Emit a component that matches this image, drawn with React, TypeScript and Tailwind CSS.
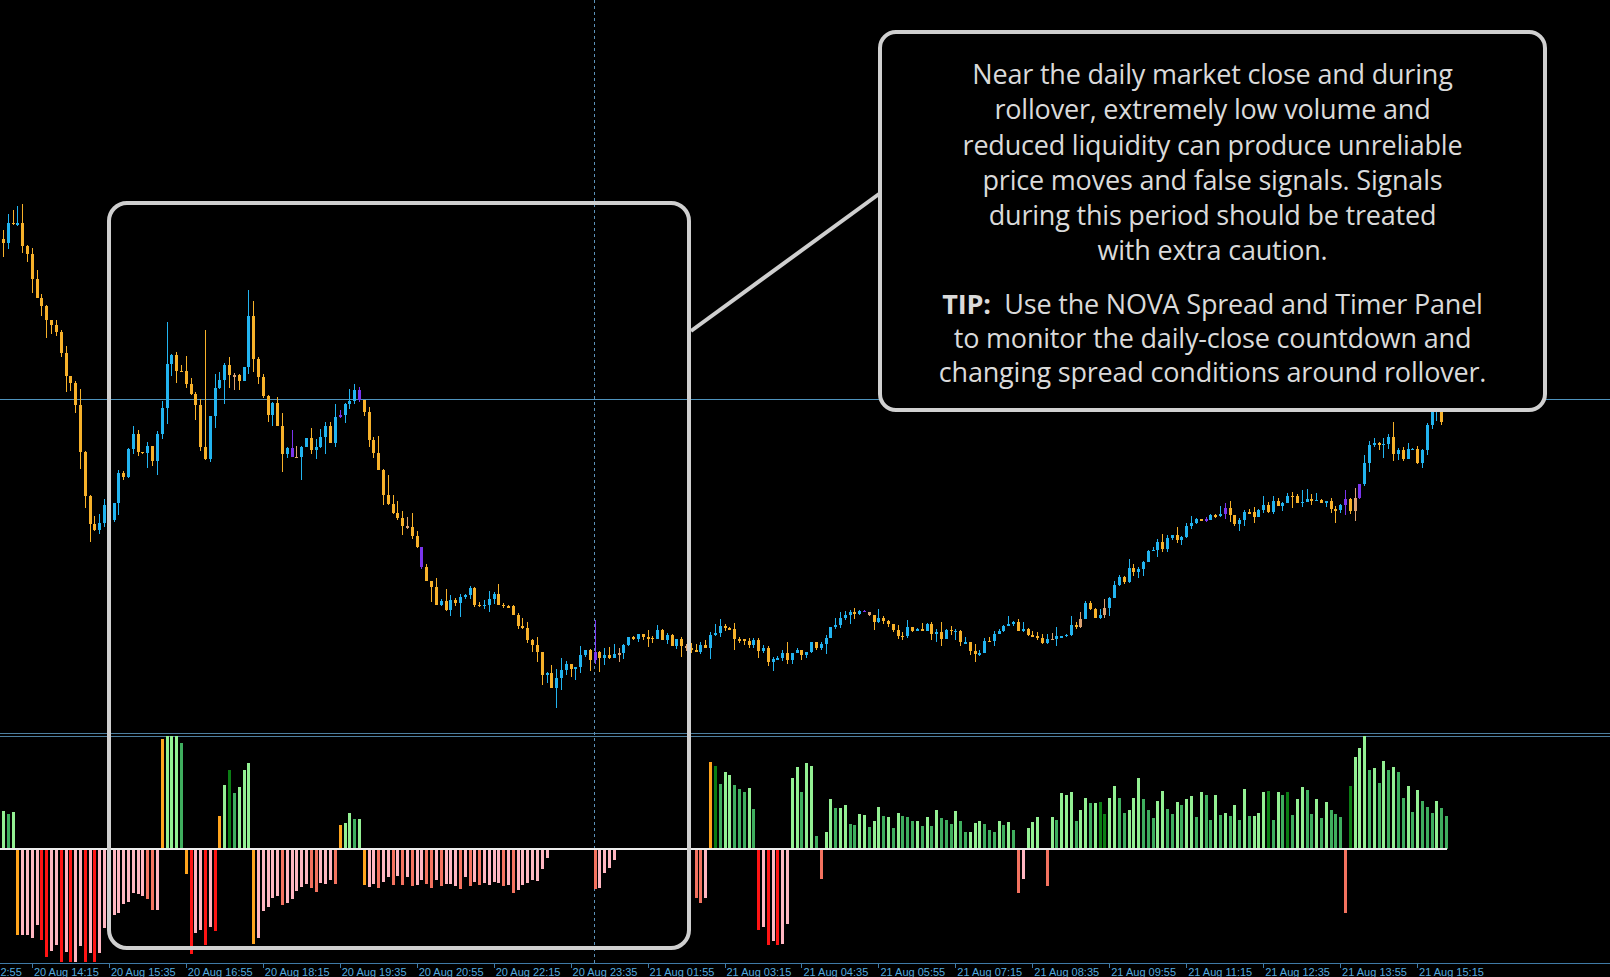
import React from "react";

// view -> actual scale for the traced waypoints
const S = 1.027;
const STEP = 4.81;
const X0 = 2;
const ZERO = 849;

function rng(seed: number) {
  let a = seed;
  return () => {
    a = (a + 0x6d2b79f5) | 0;
    let t = Math.imul(a ^ (a >>> 15), 1 | a);
    t = (t + Math.imul(t ^ (t >>> 7), 61 | t)) ^ t;
    return ((t ^ (t >>> 14)) >>> 0) / 4294967296;
  };
}

function interp(pts: number[][], x: number) {
  if (x <= pts[0][0]) return pts[0][1];
  for (let i = 1; i < pts.length; i++) {
    if (x <= pts[i][0]) {
      const [x0, y0] = pts[i - 1];
      const [x1, y1] = pts[i];
      return y0 + ((y1 - y0) * (x - x0)) / (x1 - x0);
    }
  }
  return pts[pts.length - 1][1];
}

const PRICE = [
  [0, 240], [8, 225], [15, 215], [20, 240], [30, 265], [40, 300], [50, 320], [60, 345], [68, 380],
  [75, 420], [80, 470], [85, 505], [95, 505], [105, 500], [112, 480], [120, 450], [130, 420],
  [140, 445], [150, 440], [158, 380], [165, 345], [172, 350], [180, 385], [190, 405], [198, 440],
  [205, 390], [212, 365], [220, 350], [228, 370], [235, 360], [242, 305], [247, 365], [255, 385],
  [265, 405], [275, 440], [285, 460], [295, 430], [305, 432], [315, 425], [325, 415], [335, 398],
  [342, 385], [350, 400], [360, 430], [368, 470], [378, 500], [390, 510], [400, 525], [410, 545],
  [418, 575], [425, 590], [435, 595], [445, 585], [455, 580], [465, 585], [475, 585], [485, 588],
  [495, 592], [505, 605], [513, 625], [522, 640], [530, 660], [538, 672], [545, 655], [555, 645],
  [565, 640], [578, 638], [585, 642], [595, 635], [610, 625], [625, 615], [640, 620], [655, 625],
  [668, 628], [680, 630], [690, 622], [700, 610], [710, 618], [725, 622], [740, 632], [752, 645],
  [762, 640], [772, 635], [785, 632], [795, 625], [805, 618], [815, 608], [825, 597], [835, 595],
  [845, 600], [855, 605], [865, 612], [875, 622], [885, 610], [895, 610], [905, 612], [915, 618],
  [925, 615], [935, 625], [945, 638], [955, 632], [965, 615], [975, 608], [990, 610], [1000, 614],
  [1010, 622], [1020, 628], [1030, 618], [1040, 612], [1050, 605], [1058, 585], [1066, 598],
  [1075, 590], [1082, 575], [1090, 565], [1100, 555], [1110, 548], [1120, 535], [1130, 530],
  [1140, 525], [1150, 518], [1160, 510], [1170, 505], [1180, 498], [1190, 495], [1200, 505],
  [1210, 502], [1220, 503], [1230, 496], [1240, 492], [1250, 490], [1256, 475], [1262, 488],
  [1270, 490], [1280, 490], [1290, 492], [1300, 490], [1310, 495], [1318, 488], [1325, 475],
  [1330, 432], [1340, 425], [1350, 428], [1360, 440], [1370, 438], [1380, 448], [1385, 432],
  [1390, 412], [1398, 400], [1405, 405],
];

const VOL = [
  [0, 13], [330, 13], [400, 9], [560, 8], [700, 6], [1050, 5], [1330, 6], [1345, 9], [1450, 9],
];

// a few long wicks seen on the chart: [actual x, y of wick tip]
const SPIKES = [
  [16, 206], [248, 290], [595, 620], [167, 322], [555, 708], [205, 330],
];

// histogram envelope, actual px, positive = up from zero line
const HIST = [
  [0, 38], [14, 35], [16, -70], [22, -90], [32, -75], [42, -95], [55, -108], [72, -112], [92, -110],
  [102, -95], [108, -60], [122, -50], [140, -45], [156, -60], [160, 110], [172, 105], [183, 85],
  [186, -105], [200, -90], [214, -70], [220, 70], [232, 65], [248, 70], [251, -80], [262, -65],
  [282, -48], [302, -38], [320, -36], [336, -32], [339, 30], [358, 30], [362, -32], [400, -32],
  [450, -34], [500, -30], [520, -42], [540, -25], [548, 0], [590, 0], [593, -40], [605, -22],
  [620, 0], [690, 0], [694, -55], [704, -55], [708, 95], [722, 62], [752, 58], [756, -70],
  [770, -85], [786, -80], [790, 72], [812, 68], [817, -32], [822, -32], [826, 42], [850, 32],
  [900, 28], [950, 28], [1000, 25], [1014, 22], [1017, -38], [1022, -25], [1025, 30], [1040, 25],
  [1042, -35], [1047, -35], [1050, 38], [1100, 48], [1150, 48], [1200, 42], [1250, 42], [1290, 46],
  [1340, 32], [1344, -60], [1347, 52], [1360, 78], [1365, 112], [1376, 112], [1382, 80],
  [1400, 50], [1440, 40], [1447, 40],
];

const pricePath = (x: number) => interp(PRICE, x / S) * S;

type Candle = { x: number; open: number; close: number; high: number; low: number; color: string };
type Bar = { x: number; v: number; color: string };

function buildCandles(): Candle[] {
  const r = rng(11);
  const out: Candle[] = [];
  let prev = pricePath(X0) - 4;
  for (let i = 0; X0 + i * STEP <= 1444; i++) {
    const x = X0 + i * STEP;
    const vol = interp(VOL, x);
    const close = pricePath(x) + (r() - 0.5) * 2 * vol;
    const open = prev;
    let high = Math.min(open, close) - r() * r() * vol * 2.2;
    let low = Math.max(open, close) + r() * r() * vol * 2.2;
    for (const [sx, sy] of SPIKES) {
      if (Math.abs(sx - x) < STEP / 2) {
        if (sy < high) high = sy;
        if (sy > low) low = sy;
      }
    }
    const up = close < open;
    const k = r();
    let color = up ? "#22b4f0" : "#f7b12a";
    if (k < 0.03) color = "#7b35ee";
    else if (k < 0.065) color = "#dca271";
    out.push({ x, open, close, high, low, color });
    prev = close;
  }
  return out;
}

function buildBars(): Bar[] {
  const r = rng(21);
  const out: Bar[] = [];
  let prev = 0;
  let lastSign = 1;
  for (let i = 0; X0 + i * STEP <= 1447; i++) {
    const x = X0 + i * STEP;
    const env = interp(HIST, x);
    if (Math.abs(env) < 4) {
      prev = 0;
      continue;
    }
    // the green run on the right is much choppier than the pink run
    const spread = x > 800 && env > 0 ? 0.85 : 0.4;
    let v = env * (1.05 - spread / 2 + spread * r());
    v = Math.max(-113, Math.min(113, v));
    const sign = v > 0 ? 1 : -1;
    let color: string;
    if (sign !== lastSign && x < 720) color = "#ffa41c";
    else if (sign > 0) {
      const k = r();
      if (k < 0.07) color = "#0b7d14";
      else if (v >= prev * 0.96) color = "#93f093";
      else color = "#3fae5e";
    } else {
      if (v < prev - 3) color = Math.abs(v) > 75 ? "#ff1414" : "#f3725f";
      else color = "#ffb6c1";
    }
    out.push({ x, v, color });
    prev = v;
    lastSign = sign;
  }
  return out;
}

const LABELS = [
  "20 Aug 12:55", "20 Aug 14:15", "20 Aug 15:35", "20 Aug 16:55", "20 Aug 18:15", "20 Aug 19:35",
  "20 Aug 20:55", "20 Aug 22:15", "20 Aug 23:35", "21 Aug 01:55", "21 Aug 03:15", "21 Aug 04:35",
  "21 Aug 05:55", "21 Aug 07:15", "21 Aug 08:35", "21 Aug 09:55", "21 Aug 11:15", "21 Aug 12:35",
  "21 Aug 13:55", "21 Aug 15:15",
];

function Chart() {
  const candles = buildCandles();
  const bars = buildBars();
  return (
    <svg className="block" width={1610} height={977} shapeRendering="crispEdges">
      {/* grid lines */}
      <line x1={0} x2={1610} y1={399.5} y2={399.5} stroke="#4f93bd" strokeWidth={1} />
      <line x1={0} x2={1610} y1={733.5} y2={733.5} stroke="#4d7e9f" strokeWidth={1} />
      <line x1={0} x2={1610} y1={736.5} y2={736.5} stroke="#4d7e9f" strokeWidth={1} />
      <line x1={594.5} x2={594.5} y1={0} y2={963} stroke="#5c92b9" strokeWidth={1} strokeDasharray="3 3" />

      {/* candles */}
      {candles.map((c, i) => {
        const top = Math.min(c.open, c.close);
        const h = Math.max(1.5, Math.abs(c.close - c.open));
        return (
          <g key={i} fill={c.color}>
            <rect x={c.x + 1} y={c.high} width={1} height={c.low - c.high} />
            <rect x={c.x} y={top} width={3} height={h} />
          </g>
        );
      })}

      {/* histogram */}
      {bars.map((b, i) => (
        <rect
          key={i}
          x={b.x}
          y={b.v > 0 ? ZERO - b.v : ZERO}
          width={3}
          height={Math.abs(b.v)}
          fill={b.color}
        />
      ))}
      <line x1={0} x2={1447} y1={849} y2={849} stroke="#ececec" strokeWidth={2} />

      {/* time axis */}
      <line x1={0} x2={1610} y1={963.5} y2={963.5} stroke="#3f7aa6" strokeWidth={1} />
      {LABELS.map((l, i) => {
        const x = -45 + i * 76.95;
        return (
          <g key={l}>
            <line x1={x + 0.5} x2={x + 0.5} y1={963} y2={968} stroke="#3f7aa6" />
            <text
              x={x + 2}
              y={976}
              fill="#55aadf"
              fontSize={11}
              fontFamily="'Liberation Sans', Arial, sans-serif"
            >
              {l}
            </text>
          </g>
        );
      })}

      {/* annotation: highlight box + connector */}
      <g shapeRendering="geometricPrecision" fill="none" stroke="#cfcfcf" strokeWidth={4}>
        <rect x={109} y={203} width={580} height={745} rx={18} />
        <line x1={691} y1={331} x2={879} y2={194} />
      </g>
    </svg>
  );
}

const para1 = [
  "Near the daily market close and during",
  "rollover, extremely low volume and",
  "reduced liquidity can produce unreliable",
  "price moves and false signals. Signals",
  "during this period should be treated",
  "with extra caution.",
];

const para2 = [
  "to monitor the daily-close countdown and",
  "changing spread conditions around rollover.",
];

export default function App() {
  return (
    <div className="relative h-[977px] w-[1610px] overflow-hidden bg-black">
      <Chart />

      <div className="absolute left-[878px] top-[30px] flex h-[382px] w-[669px] flex-col items-center rounded-[18px] border-4 border-[#d0d0d0] bg-black pt-[22px] text-center font-['Open_Sans','Noto_Sans',sans-serif] text-[27px] tracking-[-0.2px] text-[#dadada]">
        <div className="leading-[35.3px]">
          {para1.map((l) => (
            <div key={l} className="whitespace-nowrap">
              {l}
            </div>
          ))}
        </div>
        <div className="mt-[19px] leading-[34px]">
          <div className="whitespace-pre">
            <span className="font-bold">TIP:</span>  Use the NOVA Spread and Timer Panel
          </div>
          {para2.map((l) => (
            <div key={l} className="whitespace-nowrap">
              {l}
            </div>
          ))}
        </div>
      </div>
    </div>
  );
}
